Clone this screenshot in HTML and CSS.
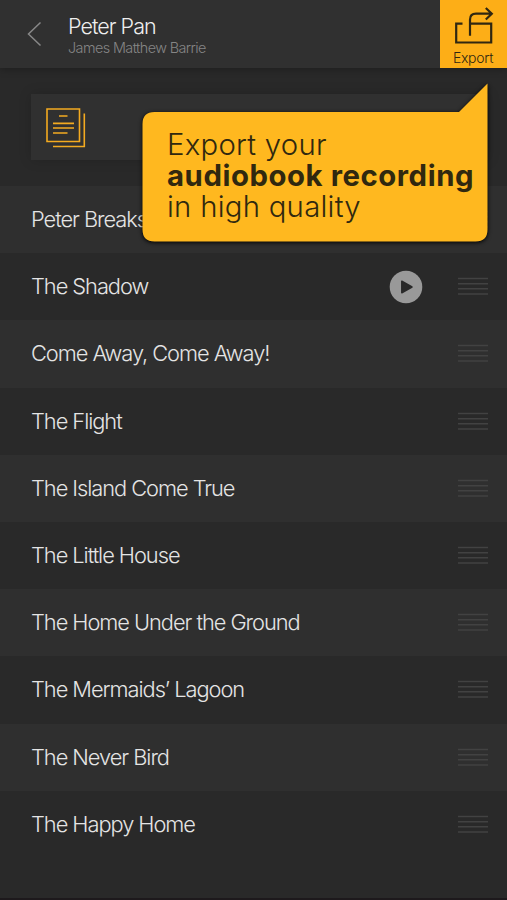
FILE: index.html
```html
<!DOCTYPE html>
<html lang="en">
<head>
<meta charset="utf-8">
<title>Peter Pan</title>
<link rel="stylesheet" href="styles.css">
</head>
<body>
<svg class="defs" width="0" height="0" aria-hidden="true">
  <symbol id="grip" viewBox="0 0 30 19"><path d="M0 1.5H30M0 6.7H30M0 11.8H30M0 17H30" fill="none" stroke="currentColor" stroke-width="1.5"/></symbol>
</svg>
<main class="app">
  <header class="header">
    <svg class="back" viewBox="0 0 16 26"><path d="M13.5 1.5L1.5 13L13.5 24.5" fill="none" stroke="currentColor" stroke-width="1.5"/></svg>
    <div class="heading">
      <h1 class="title">Peter Pan</h1>
      <p class="author">James Matthew Barrie</p>
    </div>
    <button class="export">
      <svg class="export-icon" viewBox="0 0 40 40"><path d="M8.5 17.7H2.2V36.5H37.2V17.7H16M16 29.7V13.7Q16 7.7 22 7.7H37M31.8 2L37.8 7.7L31.8 13.5" fill="none" stroke="currentColor" stroke-width="2.2"/></svg>
      <span class="export-label">Export</span>
    </button>
  </header>
  <section class="info">
    <div class="info-card">
      <svg class="info-icon" viewBox="0 0 40 40"><path d="M1 1H33.5V33.5H1ZM38.3 5.5V38.5H7" fill="none" stroke="currentColor" stroke-width="1.6"/><path d="M13 8H21.5M7 15.3H28M7 20H28M7 25H21.5" fill="none" stroke="currentColor" stroke-width="1.7"/></svg>
    </div>
  </section>
  <ul class="chapters">
    <li class="chapter"><span class="name">Peter Breaks</span><svg class="grip"><use href="#grip"/></svg></li>
    <li class="chapter"><span class="name">The Shadow</span><svg class="play" viewBox="0 0 34 34"><circle cx="17" cy="17" r="16.3" fill="#999"/><path d="M12.8 11.2V22.8L23 17Z" fill="#292929" stroke="#292929" stroke-width="1.5" stroke-linejoin="round"/></svg><svg class="grip"><use href="#grip"/></svg></li>
    <li class="chapter"><span class="name">Come Away, Come Away!</span><svg class="grip"><use href="#grip"/></svg></li>
    <li class="chapter"><span class="name">The Flight</span><svg class="grip"><use href="#grip"/></svg></li>
    <li class="chapter"><span class="name">The Island Come True</span><svg class="grip"><use href="#grip"/></svg></li>
    <li class="chapter"><span class="name">The Little House</span><svg class="grip"><use href="#grip"/></svg></li>
    <li class="chapter"><span class="name">The Home Under the Ground</span><svg class="grip"><use href="#grip"/></svg></li>
    <li class="chapter"><span class="name">The Mermaids’ Lagoon</span><svg class="grip"><use href="#grip"/></svg></li>
    <li class="chapter"><span class="name">The Never Bird</span><svg class="grip"><use href="#grip"/></svg></li>
    <li class="chapter"><span class="name">The Happy Home</span><svg class="grip"><use href="#grip"/></svg></li>
  </ul>
  <aside class="callout">
    <svg class="callout-shape" viewBox="0 0 346 160"><path d="M345.5 0.5V146.5Q345.5 158.5 333.5 158.5H12.5Q0.5 158.5 0.5 146.5V41Q0.5 29 12.5 29H317Z" fill="#ffb81f"/></svg>
    <div class="callout-text">
      <p>Export your</p>
      <p class="strong">audiobook recording</p>
      <p>in high quality</p>
    </div>
  </aside>
</main>
</body>
</html>
```

FILE: styles.css
```css
* { box-sizing: border-box; }
body { margin: 0; background: #292929; font-family: Inter, "Liberation Sans", sans-serif; font-weight: 300; }
h1, p, ul { margin: 0; padding: 0; }
.defs { position: absolute; }
.app { position: relative; width: 507px; height: 900px; overflow: hidden; background: #292929; border-bottom: 2px solid #1d191c; }
.header { display: flex; height: 68px; background: #303030; box-shadow: 0 1px 8px rgba(0, 0, 0, .3); }
.back { width: 16px; height: 26px; margin: 21px 0 0 27px; color: #888; }
.heading { flex: 1; padding: 13px 0 0 25px; }
.title { font-size: 21.5px; line-height: 26px; font-weight: 300; letter-spacing: -.95px; color: #eee; }
.author { font-size: 14.4px; line-height: 17px; letter-spacing: -.58px; color: #858585; }
.export { display: flex; flex-direction: column; align-items: center; width: 67px; height: 68px; padding: 6px 0 0; border: 0; background: #fdae17; color: #302711; font-family: inherit; }
.export-icon { flex: none; width: 40px; height: 40px; }
.export-label { font-size: 14px; line-height: 17px; margin: 3px 1px 0 0; font-weight: 300; letter-spacing: -.3px; }
.info { height: 118px; padding: 26px 19px 0 31px; }
.info-card { height: 66px; padding: 14px 15px; background: #303030; box-shadow: 0 0 12px rgba(0, 0, 0, .16); }
.info-icon { display: block; width: 40px; height: 40px; color: #f3aa20; }
.chapters { list-style: none; }
.chapter { display: flex; align-items: center; height: 67.2px; padding: 0 19px 0 31px; }
.chapter:nth-child(odd) { background: #2f2f2f; }
.name { flex: 1; padding-bottom: 1px; font-size: 21.8px; letter-spacing: -1.03px; color: #e4e4e4; white-space: nowrap; }
.play { width: 34px; height: 34px; margin-right: 35px; }
.grip { width: 30px; height: 19px; color: #424242; }
.callout { position: absolute; left: 142px; top: 83px; width: 346px; height: 160px; }
.callout-shape { display: block; width: 346px; height: 160px; filter: drop-shadow(0 1px 2px #000); }
.callout-text { position: absolute; left: 25px; top: 46px; font-size: 29.3px; line-height: 31px; letter-spacing: .27px; color: #30280f; white-space: nowrap; }
.callout-text .strong { font-weight: 700; letter-spacing: .57px; }
```
